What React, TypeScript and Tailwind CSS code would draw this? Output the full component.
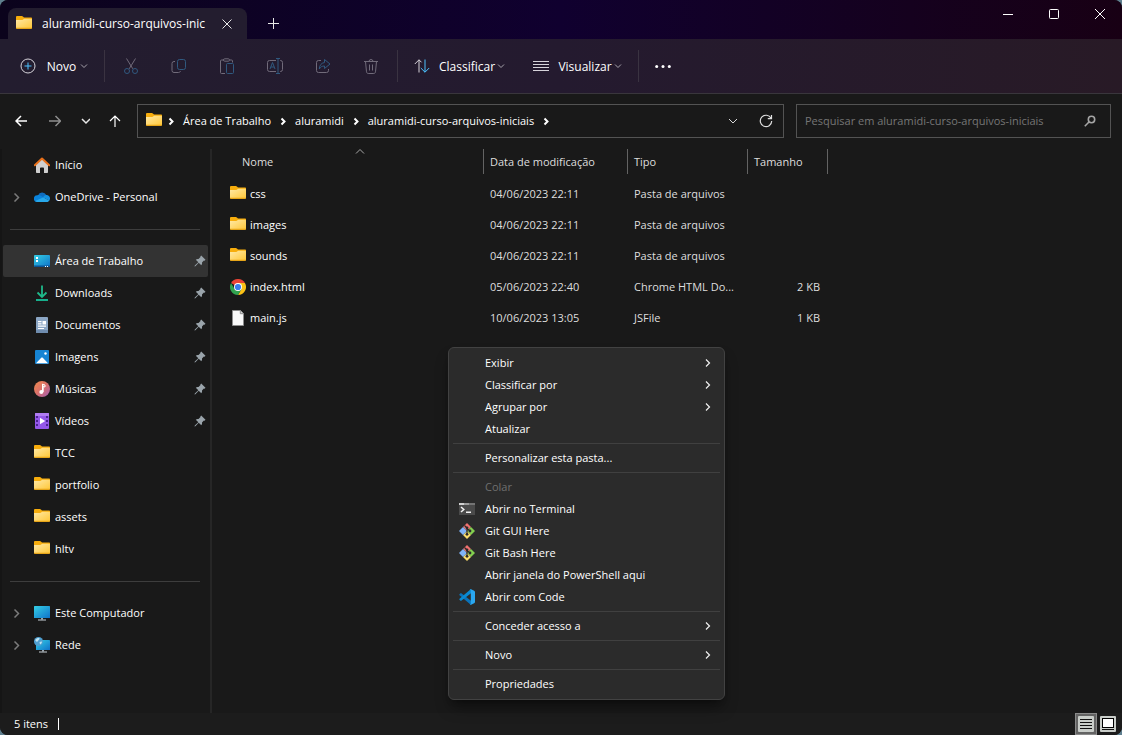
import type { ReactNode } from "react";
import clsx from "clsx";

// ---------- Icons ----------

const FolderIcon = () => (
  <svg className="h-4 w-4 shrink-0" viewBox="0 0 16 16" aria-hidden="true">
    <defs>
      <linearGradient id="folder" x1="0" y1="0" x2="1" y2="1">
        <stop offset="0" stopColor="#ffe9a6" />
        <stop offset="1" stopColor="#ffc83a" />
      </linearGradient>
    </defs>
    <path d="M0 1.200C0 .5.5 0 1.200 0h4.600c.5 0 .8.200 1.100.5L8 1.600h7c.6 0 1 .4 1 1V11H0z" fill="#f7ad0c" />
    <path d="M0 4h6.200c.4 0 .7-.1 1-.4l.8-.8h7.200c.5 0 .8.300.8.800V12H0z" fill="url(#folder)" />
    <path d="M0 11.800h16v.2c0 .6-.4 1-1 1H1c-.6 0-1-.4-1-1z" fill="#e6a519" />
  </svg>
);

const HomeIcon = () => (
  <svg className="h-4 w-4 shrink-0" viewBox="0 0 16 16" aria-hidden="true">
    <path d="M2 7l6-5.500L14 7v8.200c0 .4-.3.8-.8.800H10v-4.600c0-.5-.3-.8-.8-.8H6.800c-.5 0-.8.300-.8.800V16H2.800c-.5 0-.8-.4-.8-.8z" fill="#cfcfcf" />
    <path d="M.8 8.300L8 1.600l7.200 6.700" fill="none" stroke="#e8701a" strokeWidth="2" strokeLinejoin="round" strokeLinecap="round" />
  </svg>
);

const OneDriveIcon = () => (
  <svg className="h-4 w-4 shrink-0" viewBox="0 0 16 16" aria-hidden="true">
    <path d="M4 6.400A4.500 4.500 0 0 1 12.300 6l-2 4.500L3 12z" fill="#0f6cbd" />
    <path d="M3.600 6.200c1.300-.3 2.700.1 3.600.8l4 2.600L3 13A3.400 3.400 0 0 1 3.600 6.200z" fill="#0a84dc" />
    <path d="M12.200 6A3.500 3.500 0 0 1 16 9.600c0 .8-.2 1.500-.6 2L9 8.500c.7-1.500 1.800-2.400 3.200-2.500z" fill="#1490df" />
    <path d="M1.200 12.100L9 8.400l6.500 3.100c-.6.900-1.500 1.500-2.700 1.500H3.600c-1 0-1.800-.3-2.400-.9z" fill="#28a8ea" />
  </svg>
);

const DesktopIcon = () => (
  <svg className="h-4 w-4 shrink-0" viewBox="0 0 16 16" aria-hidden="true">
    <defs>
      <linearGradient id="desk" x1="0" y1="0" x2="1" y2="1">
        <stop offset="0" stopColor="#35d0e6" />
        <stop offset="1" stopColor="#0f72c9" />
      </linearGradient>
    </defs>
    <rect y="2" width="16" height="12" rx="1" fill="url(#desk)" />
    <path d="M0 12.600h16v.6c0 .5-.4.8-.8.800H.8c-.5 0-.8-.3-.8-.8z" fill="#0b5394" />
    <path d="M2 4h2v2H2zM2 7h2v2H2zM11 13h1v1h-1zM13 13h1v1h-1z" fill="#fff" />
  </svg>
);

const DownloadsIcon = () => (
  <svg className="h-4 w-4 shrink-0" viewBox="0 0 16 16" fill="none" aria-hidden="true">
    <path d="M8 .5v11M3.500 7.500L8 12l4.500-4.500" stroke="#1fb98b" strokeWidth="1.800" />
    <path d="M2 15h12" stroke="#18c19a" strokeWidth="1.800" />
  </svg>
);

const DocumentsIcon = () => (
  <svg className="h-4 w-4 shrink-0" viewBox="0 0 16 16" aria-hidden="true">
    <rect x="2" width="12" height="16" rx="1" fill="#8ba6c4" />
    <path d="M2 13h12v2c0 .6-.4 1-1 1H3c-.6 0-1-.4-1-1z" fill="#6f8cae" />
    <path d="M4 4h3.500v1.200H4zM4 6.300h3.500v1.200H4zM8.500 4H12v3.500H8.500zM4 8.600h8v1.200H4zM4 10.900h6v1.200H4z" fill="#fff" />
  </svg>
);

const PicturesIcon = () => (
  <svg className="h-4 w-4 shrink-0" viewBox="0 0 16 16" aria-hidden="true">
    <rect x="1" y="1" width="14" height="14" rx="1" fill="#1684d3" />
    <path d="M2 14.200L7 9c.6-.6 1.400-.6 2 0l5 5.200z" fill="#fff" />
    <circle cx="11.500" cy="4.500" r="1.200" fill="#fff" />
  </svg>
);

const MusicIcon = () => (
  <svg className="h-4 w-4 shrink-0" viewBox="0 0 16 16" aria-hidden="true">
    <defs>
      <linearGradient id="music" x1="0" y1="0" x2="1" y2="1">
        <stop offset="0" stopColor="#f08a4b" />
        <stop offset=".5" stopColor="#d9706c" />
        <stop offset="1" stopColor="#a05fb8" />
      </linearGradient>
    </defs>
    <circle cx="8" cy="8" r="8" fill="url(#music)" />
    <path d="M8 3.200L11 4v2l-1.900-.5V11" fill="none" stroke="#fff" />
    <path d="M8 3.200h1.300v8H8z" fill="#fff" />
    <circle cx="7.300" cy="11" r="2" fill="#fff" />
  </svg>
);

const VideosIcon = () => (
  <svg className="h-4 w-4 shrink-0" viewBox="0 0 16 16" aria-hidden="true">
    <rect x="1" width="14" height="16" rx="1" fill="#9457e8" />
    <path d="M1 1c0-.6.400-1 1-1h12c.6 0 1 .4 1 1v2H1z" fill="#b07cf2" />
    <path d="M2 3h2v2H2zM2 7h2v2H2zM2 11h2v2H2zM12 3h2v2h-2zM12 7h2v2h-2zM12 11h2v2h-2z" fill="#4a2391" />
    <path d="M6 4.800v6.400L11.200 8z" fill="#fff" />
  </svg>
);

const ComputerIcon = () => (
  <svg className="h-4 w-4 shrink-0" viewBox="0 0 16 16" aria-hidden="true">
    <rect y="1" width="16" height="12" rx=".6" fill="url(#desk)" />
    <path d="M7 13h2v1.500H7z" fill="#9aa5ad" />
    <path d="M4 14.500h8v1H4z" fill="#c8d0d6" />
  </svg>
);

const NetworkIcon = () => (
  <svg className="h-4 w-4 shrink-0" viewBox="0 0 16 16" aria-hidden="true">
    <rect x="2" y="3" width="14" height="10" rx=".6" fill="url(#desk)" />
    <path d="M8 13h2v1.500H8z" fill="#9aa5ad" />
    <path d="M5 14.500h8v1H5z" fill="#c8d0d6" />
    <circle cx="4.500" cy="4.500" r="4.500" fill="#4f9fd0" />
    <path d="M1.500 2.500c1-1.300 2.500-1.800 4-1.500.2 1.500-1 2-1.500 3s-1.500 1-2.500-.2zM5.500 5l2.500-.5c0 1.500-.8 2.600-2 3z" fill="#bfe3f2" />
  </svg>
);

const ChromeIcon = () => (
  <svg className="h-4 w-4 shrink-0" viewBox="0 0 16 16" aria-hidden="true">
    <path d="M8 8L1.070 4A8 8 0 0 1 14.930 4z" fill="#ea4335" />
    <path d="M8 4h6.930A8 8 0 0 1 8 16l3.460-6z" fill="#fbc116" />
    <path d="M1.070 4l3.470 6L8 12l3.460-2L8 16A8 8 0 0 1 1.070 4z" fill="#31a350" />
    <circle cx="8" cy="8" r="4" fill="#fff" />
    <circle cx="8" cy="8" r="3.100" fill="#3b7ded" />
  </svg>
);

const FileIcon = () => (
  <svg className="h-4 w-4 shrink-0" viewBox="0 0 16 16" aria-hidden="true">
    <path d="M2.500.5h7.800l3.200 3.200v11.800h-11z" fill="#fafafa" stroke="#8d8d8d" />
    <path d="M10.300.5v3.200h3.200" fill="#d8d8d8" stroke="#8d8d8d" />
  </svg>
);

const TerminalIcon = () => (
  <svg className="h-4 w-4" viewBox="0 0 16 16" aria-hidden="true">
    <path d="M0 2h16v12H0z" fill="#4a4a4a" />
    <path d="M0 2h5v2H0z" fill="#d0d0d0" />
    <path d="M5 2h5.500v2H5z" fill="#9c9c9c" />
    <path d="M10.500 2H16v2h-5.500z" fill="#747474" />
    <path d="M2 6l2.800 2.500L2 11" fill="none" stroke="#f2f2f2" strokeWidth="1.500" />
    <path d="M7 10.500h5V12H7z" fill="#f2f2f2" />
  </svg>
);

const GitIcon = () => (
  <svg className="h-4 w-4" viewBox="0 0 16 16" aria-hidden="true">
    <path d="M8 0l4 4-4 4-4-4z" fill="#f0716f" />
    <path d="M12 4l4 4-4 4-4-4z" fill="#83cf4f" />
    <path d="M8 8l4 4-4 4-4-4z" fill="#fbdd6c" />
    <path d="M4 4l4 4-4 4-4-4z" fill="#80b3f7" />
    <path d="M5.500 2.500L8 5v6M8 5.500L11 8" fill="none" stroke="#2b2b2b" strokeWidth="1.200" />
    <circle cx="8" cy="4.800" r="1.400" fill="#2b2b2b" />
    <circle cx="11" cy="8" r="1.400" fill="#2b2b2b" />
    <circle cx="8" cy="11.300" r="1.400" fill="#2b2b2b" />
  </svg>
);

const CodeIcon = () => (
  <svg className="h-4 w-4" viewBox="0 0 16 16" aria-hidden="true">
    <path d="M1.400 4.300c.3-.2.6-.2.9 0L12 11.800V16L.5 6.200c-.3-.3-.3-.6 0-.9z" fill="#0a73ba" />
    <path d="M1.400 11.700c.3.200.6.200.9 0L12 4.200V0L.5 9.800c-.3.300-.3.600 0 .9z" fill="#0a8ad2" />
    <path d="M11.600 15.900c-.4.100-.8 0-1.100-.3.500.4 1.300.1 1.300-.6V1c0-.7-.8-1-1.300-.6.300-.3.700-.4 1.100-.3l3.500 1.600c.5.300.9.800.9 1.400v9.800c0 .6-.4 1.100-.9 1.400z" fill="#2aa7f0" />
  </svg>
);

const PinIcon = () => (
  <svg className="h-3 w-3 shrink-0" viewBox="0 0 12 12" aria-hidden="true">
    <path d="M7.200.5l4.300 4.300-.9.900-.7-.2-1.900 2c.2 1 0 2-.7 2.700L4.700 7.700 1.400 11.200l-.9.300.3-.9 3.500-3.300-2.500-2.600c.7-.7 1.700-.9 2.700-.7l2-1.900-.2-.7z" fill="#9aa4ab" />
  </svg>
);

type ChevronProps = { dir: "right" | "down" | "up"; className?: string; stroke?: number };

const chevronPaths = { right: "M3.500 2.500l3 3-3 3", down: "M2 3.500l3 3 3-3", up: "M1 6.500l4-4 4 4" };

const Chevron = ({ dir, className, stroke = 1 }: ChevronProps) => (
  <svg className={clsx("h-2.5 w-2.5 shrink-0", className)} viewBox="0 0 10 10" fill="none" stroke="currentColor" strokeWidth={stroke} aria-hidden="true">
    <path d={chevronPaths[dir]} />
  </svg>
);

const Glyph = ({ children }: { children: ReactNode }) => (
  <svg className="h-4 w-4 shrink-0" viewBox="0 0 16 16" fill="none" stroke="#d6d3da" aria-hidden="true">
    {children}
  </svg>
);

const muted = "#716b7a";
const mutedBlue = "#30597f";

// ---------- Data ----------

const fileActions: { label: string; icon: ReactNode }[] = [
  {
    label: "Recortar",
    icon: (
      <>
        <path d="M3.500.5l6.300 10.300M12.500.5L6.200 10.800" stroke={muted} />
        <circle cx="4" cy="13" r="2.500" stroke={mutedBlue} />
        <circle cx="12" cy="13" r="2.500" stroke={mutedBlue} />
      </>
    ),
  },
  {
    label: "Copiar",
    icon: (
      <>
        <path d="M4 3.500H3a2 2 0 0 0-2 2v7a2 2 0 0 0 2 2h4.500c1 0 1.800-.6 2-1.500" stroke={muted} />
        <rect x="6.500" y="1.500" width="8" height="10" rx="2" stroke={mutedBlue} />
      </>
    ),
  },
  {
    label: "Colar",
    icon: (
      <>
        <path d="M5 2H2.500a1 1 0 0 0-1 1v11.500a1 1 0 0 0 1 1H6M11 2h1.500a1 1 0 0 1 1 1v1.500" stroke={muted} />
        <rect x="4.500" y=".8" width="6" height="2.400" rx="1.200" stroke={muted} />
        <rect x="7.500" y="5.500" width="7" height="10" rx="1" stroke={mutedBlue} />
      </>
    ),
  },
  {
    label: "Renomear",
    icon: (
      <>
        <path d="M9 2.500H2.500a2 2 0 0 0-2 2v7a2 2 0 0 0 2 2H9M13 2.500h.5a2 2 0 0 1 2 2v7a2 2 0 0 1-2 2H13" stroke={muted} />
        <path d="M9 .5h4M9 15.500h4M11 .5v15M3 11l2.500-6.500L8 11M4 9h3" stroke={mutedBlue} />
      </>
    ),
  },
  {
    label: "Compartilhar",
    icon: (
      <>
        <path d="M6 2.500H3.500a2 2 0 0 0-2 2v8a2 2 0 0 0 2 2h8a2 2 0 0 0 2-2V11" stroke={muted} />
        <path d="M9.500 1.500L15 6l-5.500 4.500V8C7 8 5.500 8.800 4.300 11c0-3.500 2-6 5.200-6.500z" stroke={mutedBlue} strokeLinejoin="round" />
      </>
    ),
  },
  {
    label: "Excluir",
    icon: (
      <path d="M1 3.500h14M6 3.500a2 2 0 0 1 4 0M2.500 3.500l1 10.300c.1.900.8 1.700 1.700 1.700h5.600c.9 0 1.600-.8 1.700-1.700l1-10.300M6.500 6.500v6M9.500 6.500v6" stroke={muted} />
    ),
  },
];

type Place = { label: string; icon: ReactNode; expandable?: boolean; pinned?: boolean; active?: boolean };

const places: Place[][] = [
  [
    { label: "Início", icon: <HomeIcon /> },
    { label: "OneDrive - Personal", icon: <OneDriveIcon />, expandable: true },
  ],
  [
    { label: "Área de Trabalho", icon: <DesktopIcon />, pinned: true, active: true },
    { label: "Downloads", icon: <DownloadsIcon />, pinned: true },
    { label: "Documentos", icon: <DocumentsIcon />, pinned: true },
    { label: "Imagens", icon: <PicturesIcon />, pinned: true },
    { label: "Músicas", icon: <MusicIcon />, pinned: true },
    { label: "Vídeos", icon: <VideosIcon />, pinned: true },
    { label: "TCC", icon: <FolderIcon /> },
    { label: "portfolio", icon: <FolderIcon /> },
    { label: "assets", icon: <FolderIcon /> },
    { label: "hltv", icon: <FolderIcon /> },
  ],
  [
    { label: "Este Computador", icon: <ComputerIcon />, expandable: true },
    { label: "Rede", icon: <NetworkIcon />, expandable: true },
  ],
];

const files = [
  { name: "css", date: "04/06/2023 22:11", type: "Pasta de arquivos", size: "", icon: <FolderIcon /> },
  { name: "images", date: "04/06/2023 22:11", type: "Pasta de arquivos", size: "", icon: <FolderIcon /> },
  { name: "sounds", date: "04/06/2023 22:11", type: "Pasta de arquivos", size: "", icon: <FolderIcon /> },
  { name: "index.html", date: "05/06/2023 22:40", type: "Chrome HTML Do...", size: "2 KB", icon: <ChromeIcon /> },
  { name: "main.js", date: "10/06/2023 13:05", type: "JSFile", size: "1 KB", icon: <FileIcon /> },
];

type MenuItem = { label: string; icon?: ReactNode; submenu?: boolean; disabled?: boolean };

const menuGroups: MenuItem[][] = [
  [
    { label: "Exibir", submenu: true },
    { label: "Classificar por", submenu: true },
    { label: "Agrupar por", submenu: true },
    { label: "Atualizar" },
  ],
  [{ label: "Personalizar esta pasta..." }],
  [
    { label: "Colar", disabled: true },
    { label: "Abrir no Terminal", icon: <TerminalIcon /> },
    { label: "Git GUI Here", icon: <GitIcon /> },
    { label: "Git Bash Here", icon: <GitIcon /> },
    { label: "Abrir janela do PowerShell aqui" },
    { label: "Abrir com Code", icon: <CodeIcon /> },
  ],
  [{ label: "Conceder acesso a", submenu: true }],
  [{ label: "Novo", submenu: true }],
  [{ label: "Propriedades" }],
];

const crumbs = ["Área de Trabalho", "aluramidi", "aluramidi-curso-arquivos-iniciais"];

// ---------- Sections ----------

const TitleBar = () => (
  <header className="flex h-[39px] items-end bg-linear-to-r from-[#0b031c] via-[#10002f] to-[#180014] pl-2 text-[12px]">
    <div className="flex h-[31px] w-[239px] items-center rounded-t-lg bg-[#231d2f] pl-2">
      <FolderIcon />
      <span className="ml-2.5 flex-1 overflow-hidden whitespace-nowrap">aluramidi-curso-arquivos-inic</span>
      <button aria-label="Fechar guia" className="flex h-6 w-10 items-center justify-center">
        <svg className="h-2.5 w-2.5" viewBox="0 0 10 10" stroke="#e8e8e8" aria-hidden="true">
          <path d="M.5.5l9 9M9.500.5l-9 9" />
        </svg>
      </button>
    </div>
    <button aria-label="Nova guia" className="ml-2 flex h-[31px] w-9 items-center justify-center">
      <svg className="h-[11px] w-[11px]" viewBox="0 0 11 11" stroke="#e8e8e8" aria-hidden="true">
        <path d="M5.500 0v11M0 5.500h11" />
      </svg>
    </button>
    <div className="ml-auto flex self-start">
      <button aria-label="Minimizar" className="flex h-7 w-[46px] items-center justify-center">
        <svg className="h-3 w-3" viewBox="0 0 12 12" stroke="#fff" aria-hidden="true">
          <path d="M2 6.500h10" />
        </svg>
      </button>
      <button aria-label="Maximizar" className="flex h-7 w-[46px] items-center justify-center">
        <svg className="h-3 w-3" viewBox="0 0 12 12" fill="none" stroke="#fff" aria-hidden="true">
          <rect x="2.500" y="1.500" width="9" height="9" rx="1" />
        </svg>
      </button>
      <button aria-label="Fechar" className="flex h-7 w-[46px] items-center justify-center">
        <svg className="h-3 w-3" viewBox="0 0 12 12" stroke="#fff" aria-hidden="true">
          <path d="M2 1l10 10M12 1L2 11" />
        </svg>
      </button>
    </div>
  </header>
);

const Divider = () => <div className="h-8 w-px shrink-0 bg-[#3a3341]" />;

const Toolbar = () => (
  <div className="flex h-[55px] items-center border-b border-[#39363c] bg-linear-to-r from-[#231d2f] via-[#241a2f] to-[#281a26] text-[12px]">
    <button className="flex h-8 w-[104px] items-center pl-5">
      <Glyph>
        <circle cx="8" cy="8" r="7" />
        <path d="M8 4.500v7M4.500 8h7" stroke="#4cc2ff" />
      </Glyph>
      <span className="ml-2 w-[35px] pt-0.5">Novo</span>
      <Chevron dir="down" className="text-[#a7a3ac]" />
    </button>
    <Divider />
    <div className="flex w-[292px] gap-2 pl-1.5">
      {fileActions.map((action) => (
        <button key={action.label} aria-label={action.label} disabled className="flex h-8 w-10 items-center justify-center">
          <Glyph>{action.icon}</Glyph>
        </button>
      ))}
    </div>
    <Divider />
    <button className="flex h-8 w-[119px] items-center pl-4">
      <Glyph>
        <path d="M5 14.500V1.800M.8 6L5 1.800 7.500 4.300" />
        <path d="M11 1.500v12.700M6.800 10l4.200 4.200 4.200-4.200" stroke="#4cc2ff" />
      </Glyph>
      <span className="ml-2 w-[58px] pt-0.5">Classificar</span>
      <Chevron dir="down" className="text-[#a7a3ac]" />
    </button>
    <button className="flex h-8 w-[121px] items-center pl-4">
      <Glyph>
        <path d="M0 3.500h16M0 6.500h16M0 9.500h16M0 12.500h16" />
      </Glyph>
      <span className="ml-2 w-14 pt-0.5">Visualizar</span>
      <Chevron dir="down" className="text-[#a7a3ac]" />
    </button>
    <Divider />
    <button aria-label="Ver mais" className="flex h-8 w-12 items-center justify-center">
      <svg className="h-4 w-4" viewBox="0 0 16 16" fill="#fff" aria-hidden="true">
        <circle cx="1.700" cy="8.500" r="1.500" />
        <circle cx="8" cy="8.500" r="1.500" />
        <circle cx="14.300" cy="8.500" r="1.500" />
      </svg>
    </button>
  </div>
);

const AddressBar = () => (
  <div className="flex pt-2.5 pr-[11px] pb-[11px] pl-2">
    <nav className="flex w-[129px] items-center">
      <button aria-label="Voltar" className="flex h-8 w-[26px] items-center justify-center">
        <svg className="h-3 w-3" viewBox="0 0 12 12" fill="none" stroke="#fff" strokeWidth="1.500" aria-hidden="true">
          <path d="M12 6H1M6 1L1 6l5 5" />
        </svg>
      </button>
      <button aria-label="Avançar" disabled className="ml-2 flex h-8 w-[26px] items-center justify-center">
        <svg className="h-3 w-3" viewBox="0 0 12 12" fill="none" stroke="#8f8f8f" strokeWidth="1.500" aria-hidden="true">
          <path d="M0 6h11.500M6.500 1l5 5-5 5" />
        </svg>
      </button>
      <button aria-label="Locais recentes" className="ml-1 flex h-8 w-[26px] items-center justify-center">
        <svg className="h-2.5 w-2.5" viewBox="0 0 10 10" fill="none" stroke="#e8e8e8" strokeWidth="1.500" aria-hidden="true">
          <path d="M2 3l4 4 4-4" />
        </svg>
      </button>
      <button aria-label="Acima" className="ml-1 flex h-8 w-[26px] items-center justify-center">
        <svg className="h-3 w-3" viewBox="0 0 12 12" fill="none" stroke="#fff" strokeWidth="1.200" aria-hidden="true">
          <path d="M6 12V1M1 6l5-5 5 5" />
        </svg>
      </button>
    </nav>
    <div className="flex h-[34px] flex-1 items-center border border-[#535353] pl-2">
      <FolderIcon />
      <Chevron dir="right" stroke={2} className="ml-1" />
      {crumbs.map((crumb) => (
        <div key={crumb} className="flex items-center">
          <button className="px-[7px] whitespace-nowrap">{crumb}</button>
          <Chevron dir="right" stroke={2} />
        </div>
      ))}
      <button aria-label="Locais anteriores" className="ml-auto flex h-8 w-8 items-center justify-center">
        <svg className="h-2.5 w-2.5" viewBox="0 0 10 10" fill="none" stroke="#d8d8d8" aria-hidden="true">
          <path d="M1 3l4 4 4-4" />
        </svg>
      </button>
      <button aria-label="Atualizar" className="flex h-8 w-[34px] items-center justify-center">
        <svg className="h-3.5 w-3.5" viewBox="0 0 14 14" fill="none" stroke="#e0e0e0" strokeWidth="1.200" aria-hidden="true">
          <path d="M12 4.200A5.700 5.700 0 1 0 12.700 7M12.500 1v3.700H8.800" />
        </svg>
      </button>
    </div>
    <label className="ml-3 flex h-[34px] w-[315px] items-center border border-[#535353] pr-3.5 pl-2">
      <input
        type="search"
        aria-label="Pesquisar"
        placeholder="Pesquisar em aluramidi-curso-arquivos-iniciais"
        className="min-w-0 flex-1 bg-transparent outline-none placeholder:text-[#767676]"
      />
      <svg className="h-3 w-3 shrink-0" viewBox="0 0 12 12" fill="none" stroke="#a5a5a5" strokeWidth="1.600" aria-hidden="true">
        <circle cx="7.500" cy="4.500" r="3.200" />
        <path d="M5.200 6.800L.8 11.200" />
      </svg>
    </label>
  </div>
);

const Sidebar = () => (
  <aside className="w-[212px] shrink-0 border-r-2 border-l-2 border-r-[#262626] border-l-[#151515]">
    {places.map((group, index) => (
      <div key={index}>
        {index > 0 && (
          <div className="flex h-8 items-center pr-2.5 pl-2">
            <div className="h-px w-full bg-[#3d3d3d]" />
          </div>
        )}
        {group.map((place) => (
          <button
            key={place.label}
            className={clsx("ml-px flex h-8 w-[205px] items-center rounded-xs pr-0.5 pl-2 text-left", place.active && "bg-[#333333]")}
          >
            <span className="flex w-[23px] items-center">
              {place.expandable && (
                <svg className="h-2.5 w-2.5" viewBox="0 0 10 10" fill="none" stroke="#7b7b7b" strokeWidth="1.500" aria-hidden="true">
                  <path d="M3.500 1.500l4 4-4 4" />
                </svg>
              )}
            </span>
            {place.icon}
            <span className="ml-[5px] flex-1 whitespace-nowrap">{place.label}</span>
            {place.pinned && <PinIcon />}
          </button>
        ))}
      </div>
    ))}
  </aside>
);

const columns = ["Nome", "Data de modificação", "Tipo", "Tamanho"];

const FileTable = () => (
  <table className="w-[616px] table-fixed text-[#dedede]">
    <colgroup>
      <col className="w-[272px]" />
      <col className="w-36" />
      <col className="w-[120px]" />
      <col className="w-20" />
    </colgroup>
    <thead>
      <tr className="h-[29px] align-top">
        {columns.map((column, index) => (
          <th key={column} className={clsx("p-0 text-left font-normal", index === 0 && "pl-6")}>
            <div className="relative flex h-[25px] items-center border-r border-[#636363] pl-1.5">
              {column}
              {index === 0 && <Chevron dir="up" className="absolute -top-0.5 left-1/2 -translate-x-1/2 text-[#a8a8a8]" />}
            </div>
          </th>
        ))}
      </tr>
    </thead>
    <tbody>
      {files.map((file) => (
        <tr key={file.name} className="h-[31px]">
          <td className="p-0 pl-[18px] text-white">
            <div className="flex items-center gap-1">
              {file.icon}
              {file.name}
            </div>
          </td>
          <td className="p-0 pl-1.5">{file.date}</td>
          <td className="p-0 pl-1.5 whitespace-nowrap">{file.type}</td>
          <td className="p-0 pr-2 text-right">{file.size}</td>
        </tr>
      ))}
    </tbody>
  </table>
);

const ContextMenu = () => (
  <div role="menu" className="absolute top-[198px] left-[236px] w-[277px] rounded-md border border-[#424242] bg-[#2b2b2b] py-1 shadow-lg shadow-black/40">
    {menuGroups.map((group, index) => (
      <div key={index}>
        {index > 0 && <div className="mx-1 my-[3px] h-px bg-[#404040]" />}
        {group.map((item) => (
          <button
            key={item.label}
            role="menuitem"
            disabled={item.disabled}
            className={clsx("flex h-[22px] w-full items-center pr-[11px] pl-2.5 text-left", item.disabled && "text-[#6f6f6f]")}
          >
            <span className="w-[26px]">{item.icon}</span>
            <span className="flex-1 whitespace-nowrap">{item.label}</span>
            {item.submenu && (
              <svg className="h-2.5 w-2.5" viewBox="0 0 10 10" fill="none" stroke="#f0f0f0" strokeWidth="1.200" aria-hidden="true">
                <path d="M3 1.500L6.500 5 3 8.500" />
              </svg>
            )}
          </button>
        ))}
      </div>
    ))}
  </div>
);

const StatusBar = () => (
  <footer className="flex h-[22px] items-center bg-[#1c1c1c] pr-1.5 pl-3.5">
    <span>5 itens</span>
    <span className="ml-2.5 h-3 w-px bg-white" />
    <button aria-label="Detalhes" className="ml-auto flex h-[22px] w-[22px] items-center justify-center border border-[#8a8a8a] bg-[#636363]">
      <svg className="h-4 w-4" viewBox="0 0 16 16" aria-hidden="true">
        <rect width="16" height="16" rx="1" fill="#c9cdc9" />
        <path d="M2 3.500h12M2 6.500h12M2 9.500h12M2 12.500h12" stroke="#111" />
      </svg>
    </button>
    <button aria-label="Ícones grandes" className="ml-[3px] flex h-[22px] w-4 items-center justify-center">
      <svg className="h-4 w-4" viewBox="0 0 16 16" aria-hidden="true">
        <rect width="16" height="16" rx="1" fill="#c9cdc9" />
        <rect x="2.500" y="2.500" width="11" height="9" fill="#fff" stroke="#000" />
        <path d="M2 13.500h12" stroke="#111" />
      </svg>
    </button>
  </footer>
);

export default function App() {
  return (
    <div className="min-h-screen bg-[#5f7f8f]">
      <div className="flex min-h-screen flex-col overflow-hidden rounded-lg bg-[#191919] font-['Open_Sans','Noto_Sans',sans-serif] text-[11px] leading-4 text-white">
        <TitleBar />
        <Toolbar />
        <AddressBar />
        <div className="flex flex-1">
          <Sidebar />
          <main className="relative flex-1">
            <FileTable />
            <ContextMenu />
          </main>
        </div>
        <StatusBar />
      </div>
    </div>
  );
}
